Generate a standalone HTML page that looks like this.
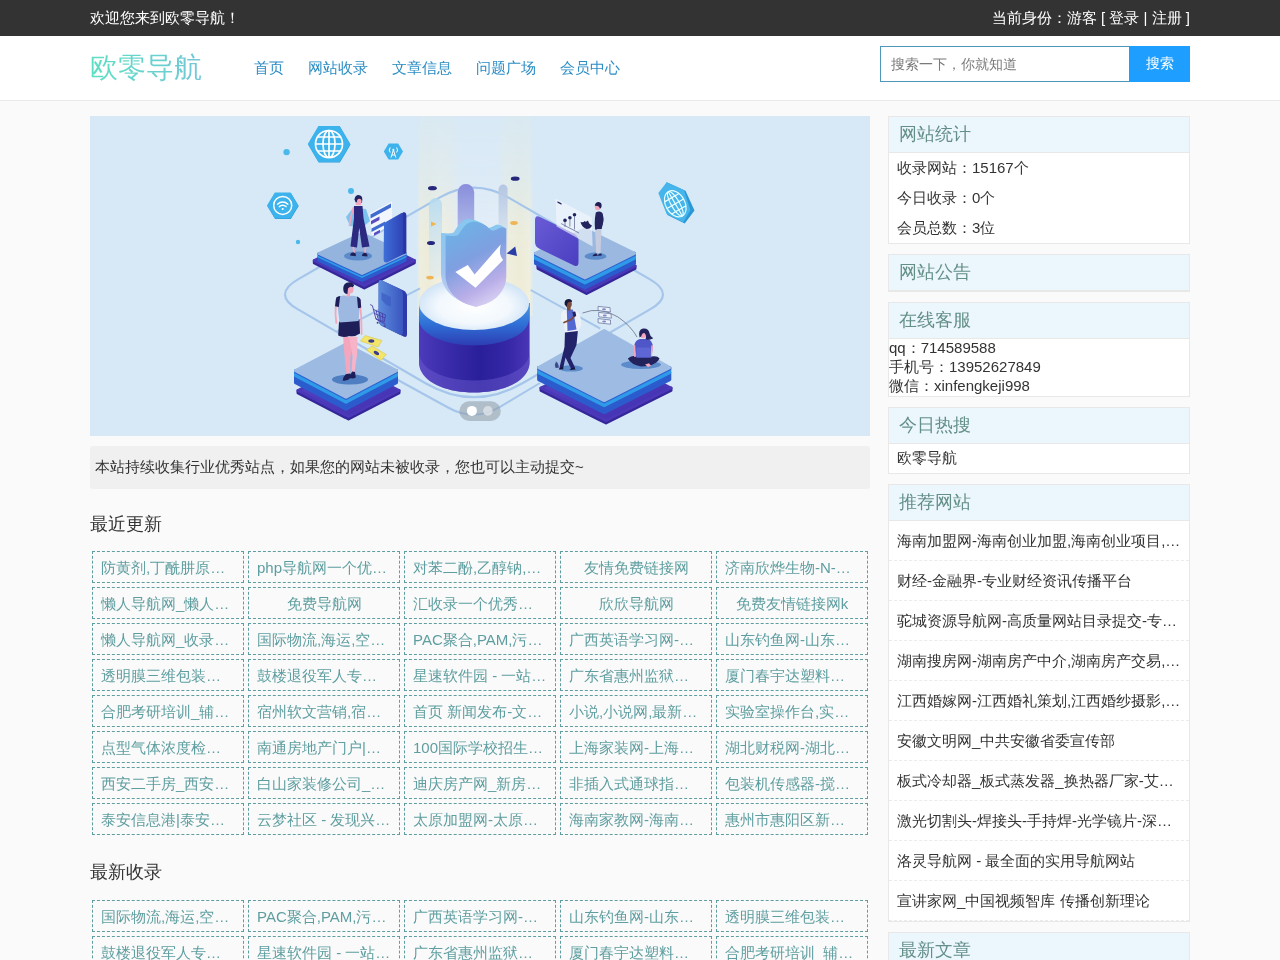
<!DOCTYPE html>
<html>
<head>
<meta charset="utf-8">
<title>欧零导航</title>
<style>
*{margin:0;padding:0;box-sizing:border-box;}
html,body{width:1280px;height:960px;overflow:hidden;}
body{font-family:"Liberation Sans",sans-serif;font-size:15px;color:#333;background:#fafafa;line-height:1.2;}
.topbar,.header,.main{will-change:transform;}
a{text-decoration:none;color:inherit;}
ul{list-style:none;}
.wrap{width:1100px;margin:0 auto;position:relative;}
.topbar{height:36px;background:#333;color:#fff;line-height:36px;font-size:15px;}
.topbar .r{position:absolute;right:0;top:0;}
.header{height:65px;background:#fff;border-bottom:1px solid #eaeaea;}
.logo{position:absolute;left:0;top:15px;font-size:28px;line-height:34px;background:linear-gradient(90deg,#5cdfc2,#74c7d8);-webkit-background-clip:text;background-clip:text;color:transparent;}
.nav{position:absolute;left:164px;top:0;}
.nav a{display:inline-block;height:64px;line-height:64px;font-size:15px;color:#2b8cc4;margin-right:24px;}
.search{position:absolute;right:0;top:10px;width:310px;height:36px;}
.search .inp{position:absolute;left:0;top:0;width:249px;height:36px;border:1px solid #4f98ba;border-right:0;background:#fff;line-height:34px;padding-left:10px;color:#7a7a7a;font-size:14px;}
.search .btn{position:absolute;right:0;top:0;width:61px;height:36px;background:#1e9fff;color:#fff;text-align:center;line-height:35px;font-size:14px;}
.main{position:relative;margin-top:15px;height:844px;}
.left{position:absolute;left:0;top:0;width:780px;}
.right{position:absolute;left:798px;top:0;width:302px;}
.banner{width:780px;height:320px;background:#d7e9f6;position:relative;overflow:hidden;}
.notice{margin-top:10px;height:43px;background:#f0f0f0;border-radius:3px;line-height:41px;padding-left:5px;font-size:15px;color:#333;}
h2.t{font-weight:normal;font-size:18px;line-height:24px;margin-top:23px;margin-bottom:13px;color:#333;}
.grid{display:flex;flex-wrap:wrap;}
.grid a{width:152px;height:32px;border:1px dashed #5f9ea0;margin:2px;line-height:32px;font-size:15px;color:#5f9ea0;padding:0 8px;white-space:nowrap;overflow:hidden;text-overflow:ellipsis;text-align:center;}
.box{border:1px solid #e8e8e8;background:#fff;margin-bottom:10px;}
.box h3{font-weight:normal;font-size:18px;height:36px;line-height:34px;background:#ecf6fd;color:#638f87;padding-left:10px;border-bottom:1px solid #e8e8e8;}
.box .li{height:30px;line-height:30px;padding-left:8px;font-size:15px;}
.box .rec{height:40px;line-height:39px;padding:0 8px;font-size:15px;border-bottom:1px dashed #ebebeb;white-space:nowrap;overflow:hidden;text-overflow:ellipsis;}
</style>
</head>
<body>
<div class="topbar"><div class="wrap"><span>欢迎您来到欧零导航！</span><span class="r">当前身份：游客 [ 登录 | 注册 ]</span></div></div>
<div class="header"><div class="wrap">
<div class="logo">欧零导航</div>
<div class="nav"><a>首页</a><a>网站收录</a><a>文章信息</a><a>问题广场</a><a>会员中心</a></div>
<div class="search"><div class="inp">搜索一下，你就知道</div><div class="btn">搜索</div></div>
</div></div>
<div class="wrap main">
<div class="left">
<div class="banner"><!--BANNER--><svg viewBox="90 116 780 320" width="780" height="320" style="position:absolute;left:0;top:0;display:block">
<defs>
<linearGradient id="gShadow" x1="0" y1="0" x2="1" y2="1"><stop offset="0" stop-color="#5a45c8"/><stop offset="1" stop-color="#3f2fae"/></linearGradient>
<linearGradient id="gBeamFade" x1="0" y1="0" x2="0" y2="1"><stop offset="0" stop-color="#fff" stop-opacity="0.12"/><stop offset="0.3" stop-color="#fff" stop-opacity="0.35"/><stop offset="0.6" stop-color="#fff" stop-opacity="0.85"/><stop offset="1" stop-color="#fff" stop-opacity="1"/></linearGradient>
<mask id="mBeam"><rect x="410" y="116" width="130" height="200" fill="url(#gBeamFade)"/></mask>
<linearGradient id="gBeam" x1="0" y1="0" x2="1" y2="0">
<stop offset="0" stop-color="#f1eedc" stop-opacity="0.2"/><stop offset="0.03" stop-color="#f1eedb"/><stop offset="0.1" stop-color="#efecd6"/><stop offset="0.2" stop-color="#f3f0de"/><stop offset="0.3" stop-color="#f0eee0"/><stop offset="0.36" stop-color="#e6eef6"/>
<stop offset="0.55" stop-color="#e4eef8"/>
<stop offset="0.7" stop-color="#e6eef6"/><stop offset="0.76" stop-color="#f2efdc"/><stop offset="0.88" stop-color="#efecd4"/><stop offset="0.97" stop-color="#f2efdb"/><stop offset="1" stop-color="#f1eedc" stop-opacity="0.2"/>
</linearGradient>
<linearGradient id="gCylBody" x1="0" y1="0" x2="1" y2="0"><stop offset="0" stop-color="#4c3bba"/><stop offset="0.25" stop-color="#3a2cab"/><stop offset="0.55" stop-color="#2a1f9a"/><stop offset="0.8" stop-color="#3527a6"/><stop offset="1" stop-color="#4a36b6"/></linearGradient>
<linearGradient id="gCylBand" x1="0" y1="0" x2="0" y2="1"><stop offset="0" stop-color="#4a9be6"/><stop offset="0.5" stop-color="#2f6fd6"/><stop offset="1" stop-color="#2d3db4"/></linearGradient>
<radialGradient id="gCylTop" cx="0.5" cy="0.55" r="0.6"><stop offset="0" stop-color="#ffffff"/><stop offset="0.55" stop-color="#f2f8fd"/><stop offset="1" stop-color="#c4dcf4"/></radialGradient>
<linearGradient id="gShield" x1="0.2" y1="0" x2="0.6" y2="1"><stop offset="0" stop-color="#6cb3e6"/><stop offset="0.45" stop-color="#7f9fe0"/><stop offset="0.8" stop-color="#b9aee8"/><stop offset="1" stop-color="#d6cef2"/></linearGradient>
<linearGradient id="gShieldSide" x1="0" y1="0" x2="0" y2="1"><stop offset="0" stop-color="#86c8f0"/><stop offset="0.6" stop-color="#9fc4f0"/><stop offset="1" stop-color="#d0d4f4"/></linearGradient>
<linearGradient id="gPill" x1="0" y1="0" x2="0" y2="1"><stop offset="0" stop-color="#8a8edc"/><stop offset="0.5" stop-color="#a9b4e6"/><stop offset="1" stop-color="#cfe0f4" stop-opacity="0.6"/></linearGradient>
<linearGradient id="gPill3" x1="0" y1="0" x2="0" y2="1"><stop offset="0" stop-color="#b4daf0" stop-opacity="0.85"/><stop offset="1" stop-color="#d8e8f4" stop-opacity="0.4"/></linearGradient>
<linearGradient id="gPill2" x1="0" y1="0" x2="0" y2="1"><stop offset="0" stop-color="#b4c6e2"/><stop offset="1" stop-color="#d6e4f4" stop-opacity="0.5"/></linearGradient>
<linearGradient id="gPanelTL" x1="0" y1="0" x2="1" y2="0"><stop offset="0" stop-color="#3f6fd8"/><stop offset="1" stop-color="#2c3cb0"/></linearGradient>
<linearGradient id="gPanelTR" x1="0" y1="0" x2="1" y2="1"><stop offset="0" stop-color="#6a5cd6"/><stop offset="1" stop-color="#4a3ec0"/></linearGradient>
<linearGradient id="gPhone" x1="0" y1="0" x2="1" y2="0"><stop offset="0" stop-color="#5a8cdc"/><stop offset="1" stop-color="#3a55c0"/></linearGradient>
</defs>
<rect x="90" y="116" width="780" height="320" fill="#d7e9f6"/>
<rect x="417" y="116" width="116" height="200" fill="url(#gBeam)" mask="url(#mBeam)"/>
<path d="M298.0,309.4 Q272.0,294.4 298.0,279.4 L439.4,197.6 Q474.0,177.6 508.6,197.6 L650.0,279.4 Q676.0,294.4 650.0,309.4 L522.5,383.2 Q474.0,411.2 425.5,383.2 Z" fill="none" stroke="#a5c5ea" stroke-width="2.2"/>
<path d="M420,288.3 L336.7,331.7 M530.7,290 L600.3,328.6" fill="none" stroke="#a5c5ea" stroke-width="2"/>
<path d="M397,379.5 L448,407.5 Q474,422 500,406.8 L540,383" fill="none" stroke="#a5c5ea" stroke-width="2"/>
<polygon points="308.1,144.6 318.7,126.6 339.90000000000003,126.6 350.5,144.6 339.90000000000003,162.6 318.7,162.6" fill="#2b97d6"/>
<polygon points="307.8,144 318.4,126 339.6,126 350.2,144 339.6,162 318.4,162" fill="#3cb3ec"/>
<g fill="none" stroke="#fff" stroke-width="1.7"><circle cx="329" cy="144" r="13.5"/><ellipse cx="329" cy="144" rx="6" ry="13.5"/><path d="M329,130.5V157.5M315.5,144H342.5M317.5,137H340.5M317.5,151H340.5"/></g>
<polygon points="383.79999999999995,151.4 388.59999999999997,143.4 398.2,143.4 403.0,151.4 398.2,159.4 388.59999999999997,159.4" fill="#3cb3ec"/>
<g fill="none" stroke="#fff" stroke-width="1"><path d="M393.4,150L391,157.5M393.4,150L395.8,157.5M392,155H394.8"/><path d="M390.2,147.5a4,4 0 0 0 0,5M396.6,147.5a4,4 0 0 1 0,5" /></g><circle cx="393.4" cy="149.8" r="1" fill="#fff"/>
<polygon points="267.3,205.9 275.15,192.9 290.85,192.9 298.7,205.9 290.85,218.9 275.15,218.9" fill="#2b97d6"/>
<polygon points="267.0,205.4 274.84999999999997,192.4 290.55,192.4 298.4,205.4 290.55,218.4 274.84999999999997,218.4" fill="#3cb3ec"/>
<g fill="none" stroke="#fff" stroke-width="1.5"><circle cx="282.7" cy="205.4" r="9"/><path d="M277.6,204.2a7,7 0 0 1 10.2,0M279.4,206.6a4.5,4.5 0 0 1 6.6,0" stroke-linecap="round"/></g><circle cx="282.7" cy="209" r="1.1" fill="#fff"/>
<polygon points="666.7,182.2 685.5,190.8 694.5,210.6 684.7,223.5 667.5,215 660,196" fill="#2b97d6"/>
<polygon points="658.3,193 666.7,182.2 684,190.3 690.4,210 683.3,222.3 666.7,214" fill="#45b5ec"/>
<g fill="none" stroke="#eaffff" stroke-width="1.2" transform="rotate(-30 675.3 203.8)"><ellipse cx="675.3" cy="203.8" rx="9.6" ry="14"/><ellipse cx="675.3" cy="203.8" rx="4.2" ry="14"/><path d="M675.3,189.8V217.8M665.7,203.8H684.9M667,196.8H683.6M667,210.8H683.6"/></g>
<circle cx="286.6" cy="152.1" r="3.2" fill="#4ab8ea"/><circle cx="351" cy="191" r="3" fill="#4ab8ea"/><circle cx="298" cy="242" r="2.2" fill="#4ab8ea"/>
<polygon points="314.3,260.5 364.3,285.5 414.3,260.5 414.3,263.0 364.3,288.0 314.3,263.0" fill="#35279a" stroke="#35279a" stroke-width="3" stroke-linejoin="round"/>
<polygon points="314.3,260.5 364.3,235.5 414.3,260.5 364.3,285.5" fill="url(#gShadow)" stroke="#4a38b8" stroke-width="3" stroke-linejoin="round"/>
<polygon points="319,256.5 362,276.5 405,256.5 405,260.5 362,280.5 319,260.5" fill="#2b5bcc" stroke="#2b5bcc" stroke-width="3" stroke-linejoin="round"/>
<polygon points="319,253.5 362,273.5 405,253.5 405,256.5 362,276.5 319,256.5" fill="#2f9be8" stroke="#2f9be8" stroke-width="3" stroke-linejoin="round"/>
<polygon points="319,253.5 362,273.5 405,253.5 405,254.7 362,274.7 319,254.7" fill="#2d62d2" stroke="#2d62d2" stroke-width="3" stroke-linejoin="round"/>
<polygon points="319,253.5 362,233.5 405,253.5 362,273.5" fill="#94b4de" stroke="#94b4de" stroke-width="3" stroke-linejoin="round"/>
<ellipse cx="358" cy="256" rx="14" ry="4.5" fill="#5c8bcb"/>
<polygon points="369.5,213.5 392,201.5 392,224 372,236" fill="#f2f6fc"/>
<polygon points="370.5,214.5 391,203.5 391,207.5 370.5,218.5" fill="#3f6bd0"/><polygon points="371,221 379.5,216.5 379.5,220 371,224.5" fill="#5a4cc0"/><polygon points="371.5,228.5 385,221.5 385,225 371.5,232" fill="#3f6bd0"/><polygon points="374,233 380,229.8 380,232.6 374,235.8" fill="#5a4cc0"/>
<polygon points="346,217 353,208 366,209 370,221 362,228 350,226" fill="#7cc3ee"/>
<path d="M384,223 L401.5,213 Q405.5,211.2 406,215 L406,253 L387,262.5 Q383.5,263 383.6,259 Z" fill="url(#gPanelTL)"/>
<path d="M403,212.6 Q406,211.2 406.4,215 L406.4,253 L403.5,254.5Z" fill="#2a34a4"/>
<g><path d="M354.5,199.5 q0.5,-4.5 4,-4.5 q4,0.3 3.8,4.8 l-0.3,3 l-2,0.5 l-4.5,-1z" fill="#23235e"/><ellipse cx="359.3" cy="201.6" rx="2.3" ry="2.8" fill="#f4a6bd"/><path d="M353.5,207.5 l-3,11 l-1,7" stroke="#f4a6bd" stroke-width="1.7" fill="none" stroke-linecap="round"/><path d="M354,206 L362.5,206 L363.5,218 L369.5,246.5 L362,247.5 L359.2,228 L357,247.5 L350.5,246.5 L354,218 Z" fill="#2c2a80"/><path d="M355.2,205 l1.2,-2.5 l4,0 l1,2.8z" fill="#f4a6bd"/><path d="M353,247 l1.5,6 M365.5,247.5 l-0.5,5.5" stroke="#f4a6bd" stroke-width="1.6"/><path d="M350,255.5 q0.5,-3.2 4,-3 l1.8,1.2 l0,2.5z M362,256 q0,-3 3.2,-3.3 l2,1.2 l0.3,2.5z" fill="#1f1f56"/></g>
<polygon points="538.0,266 586.5,291 635.0,266 635.0,268.5 586.5,293.5 538.0,268.5" fill="#35279a" stroke="#35279a" stroke-width="3" stroke-linejoin="round"/>
<polygon points="538.0,266 586.5,241 635.0,266 586.5,291" fill="url(#gShadow)" stroke="#4a38b8" stroke-width="3" stroke-linejoin="round"/>
<polygon points="535.5,258.4 585,282.9 634.5,258.4 634.5,263.4 585,287.9 535.5,263.4" fill="#2b5bcc" stroke="#2b5bcc" stroke-width="3" stroke-linejoin="round"/>
<polygon points="535.5,253.4 585,277.9 634.5,253.4 634.5,258.4 585,282.9 535.5,258.4" fill="#2f9be8" stroke="#2f9be8" stroke-width="3" stroke-linejoin="round"/>
<polygon points="535.5,253.4 585,277.9 634.5,253.4 634.5,254.6 585,279.09999999999997 535.5,254.6" fill="#2d62d2" stroke="#2d62d2" stroke-width="3" stroke-linejoin="round"/>
<polygon points="535.5,253.4 585,228.9 634.5,253.4 585,277.9" fill="#9ab8e0" stroke="#9ab8e0" stroke-width="3" stroke-linejoin="round"/>
<ellipse cx="595.5" cy="256.2" rx="11" ry="3.6" fill="#5c8bcb"/>
<path d="M535,220.5 Q535,214.5 540,217 L574,233.5 Q578.5,236 578.5,241 L578.5,262 Q578.5,267.5 574,265.5 L539,248.5 Q535,246.5 535,242 Z" fill="url(#gPanelTR)"/>
<polygon points="555.6,198.5 591.7,217.4 592.6,246.6 556.5,226.5" fill="#f4f7fc" fill-opacity="0.62"/>
<g fill="#23235e"><circle cx="565" cy="220.4" r="1.8"/><circle cx="569.9" cy="217.8" r="1.8"/><circle cx="574.5" cy="214.8" r="1.8"/><path d="M580.5,222 q1,5 6,7 q4,0 5.5,-3.5 q-3,-1 -4,-5 q-2,2 -3.5,0.5 q-1,2 -4,1z"/><rect x="557.5" y="201.6" width="4" height="1.6" transform="skewY(27) translate(0,-284.5)" /></g>
<path d="M565,221v6M569.9,219v7.5M574.5,216v13.5 M561,223.5l18,9.5" stroke="#55608a" stroke-width="0.7" fill="none"/>
<g><path d="M596.2,253.5 L595,229 L601.5,229 L600.5,253.5 z" fill="#c6cce0"/><path d="M595.8,212.5 q3.5,-1.8 6,0 q2,3 1.5,9 l-1.6,7.5 l-6.6,0 q-1,-8 0.7,-16.5z" fill="#25255f"/><path d="M601.5,214 q1.8,6 -0.5,11.5 l-5,3" stroke="#25255f" stroke-width="2.2" fill="none" stroke-linecap="round"/><ellipse cx="597.8" cy="206.8" rx="3" ry="3.5" fill="#f4a6bd"/><path d="M594.8,205.8 q0.5,-4 4,-3.8 q3.6,0.6 2.6,5.2 l-1.4,1.6 q-0.6,-3.4 -5.2,-3z" fill="#1f1f56"/><path d="M592.5,256.3 q1,-2.8 4.2,-2.8 l1,2.2z M597.5,255.8 q1.2,-2.4 3.6,-2.2 l0.8,1.8z" fill="#1f1f56"/></g>
<rect x="457.7" y="184" width="16.5" height="80" rx="8.2" fill="url(#gPill)"/>
<rect x="498.6" y="184.6" width="9" height="70" rx="4.5" fill="url(#gPill2)"/>
<rect x="429" y="198" width="13" height="80" rx="6.5" fill="url(#gPill3)"/>
<ellipse cx="432.4" cy="188.2" rx="4.4" ry="2.1" fill="#26267a"/><ellipse cx="515.2" cy="178.7" rx="4.4" ry="2.1" fill="#26267a"/><ellipse cx="431" cy="243" rx="4" ry="2" fill="#26267a"/>
<polygon points="431,221.5 436.5,224 431,226.5" fill="#f1b64a"/><ellipse cx="514" cy="223" rx="3.8" ry="1.9" fill="#eeb456"/><ellipse cx="430" cy="277.6" rx="3.8" ry="1.9" fill="#eeb456"/>
<polygon points="506.6,253.5 515.2,246.6 517,256" fill="#2a3ca6"/>
<path d="M419,303 L419,362 C419,381 444,392.5 474,392.5 C504,392.5 529.6,381 529.6,362 L529.6,303 Z" fill="url(#gCylBody)"/>
<path d="M419,352 C419,369 444,380.5 474,380.5 C504,380.5 529.6,369 529.6,352 L529.6,362 C529.6,381 504,392.5 474,392.5 C444,392.5 419,381 419,362 Z" fill="#7262d2" fill-opacity="0.42"/>
<path d="M419,303 L419,319 A55,26.5 0 0 0 529,319 L529,303 Z" fill="url(#gCylBand)"/>
<ellipse cx="474" cy="303.4" rx="55" ry="26.6" fill="url(#gCylTop)"/>
<path d="M445.6,235.6 C450,236 455,236.5 458.2,235 C461,231 463,227 466,224.8 C469,222 472,221.5 474.3,221.8 C479,222 483,224 486.3,226 C489,228 490.5,230.3 492.3,230.8 C496,230.5 499,228 501.9,227.2 L506.3,228.4 L506.3,277 C506,283 504.5,287 501.9,291.3 C498,297 494,300 490,302 C485,304.5 480,306 476.1,306.9 C472,306 467,304.5 462.4,302 C457,299 453,295.5 450.4,291.3 C447.5,287 446,282 445.6,277 Z" transform="translate(-4.60,-2.60)" fill="url(#gShieldSide)"/>
<path d="M445.6,235.6 C450,236 455,236.5 458.2,235 C461,231 463,227 466,224.8 C469,222 472,221.5 474.3,221.8 C479,222 483,224 486.3,226 C489,228 490.5,230.3 492.3,230.8 C496,230.5 499,228 501.9,227.2 L506.3,228.4 L506.3,277 C506,283 504.5,287 501.9,291.3 C498,297 494,300 490,302 C485,304.5 480,306 476.1,306.9 C472,306 467,304.5 462.4,302 C457,299 453,295.5 450.4,291.3 C447.5,287 446,282 445.6,277 Z" transform="translate(-3.83,-2.17)" fill="url(#gShieldSide)"/>
<path d="M445.6,235.6 C450,236 455,236.5 458.2,235 C461,231 463,227 466,224.8 C469,222 472,221.5 474.3,221.8 C479,222 483,224 486.3,226 C489,228 490.5,230.3 492.3,230.8 C496,230.5 499,228 501.9,227.2 L506.3,228.4 L506.3,277 C506,283 504.5,287 501.9,291.3 C498,297 494,300 490,302 C485,304.5 480,306 476.1,306.9 C472,306 467,304.5 462.4,302 C457,299 453,295.5 450.4,291.3 C447.5,287 446,282 445.6,277 Z" transform="translate(-3.07,-1.73)" fill="url(#gShieldSide)"/>
<path d="M445.6,235.6 C450,236 455,236.5 458.2,235 C461,231 463,227 466,224.8 C469,222 472,221.5 474.3,221.8 C479,222 483,224 486.3,226 C489,228 490.5,230.3 492.3,230.8 C496,230.5 499,228 501.9,227.2 L506.3,228.4 L506.3,277 C506,283 504.5,287 501.9,291.3 C498,297 494,300 490,302 C485,304.5 480,306 476.1,306.9 C472,306 467,304.5 462.4,302 C457,299 453,295.5 450.4,291.3 C447.5,287 446,282 445.6,277 Z" transform="translate(-2.30,-1.30)" fill="url(#gShieldSide)"/>
<path d="M445.6,235.6 C450,236 455,236.5 458.2,235 C461,231 463,227 466,224.8 C469,222 472,221.5 474.3,221.8 C479,222 483,224 486.3,226 C489,228 490.5,230.3 492.3,230.8 C496,230.5 499,228 501.9,227.2 L506.3,228.4 L506.3,277 C506,283 504.5,287 501.9,291.3 C498,297 494,300 490,302 C485,304.5 480,306 476.1,306.9 C472,306 467,304.5 462.4,302 C457,299 453,295.5 450.4,291.3 C447.5,287 446,282 445.6,277 Z" transform="translate(-1.53,-0.87)" fill="url(#gShieldSide)"/>
<path d="M445.6,235.6 C450,236 455,236.5 458.2,235 C461,231 463,227 466,224.8 C469,222 472,221.5 474.3,221.8 C479,222 483,224 486.3,226 C489,228 490.5,230.3 492.3,230.8 C496,230.5 499,228 501.9,227.2 L506.3,228.4 L506.3,277 C506,283 504.5,287 501.9,291.3 C498,297 494,300 490,302 C485,304.5 480,306 476.1,306.9 C472,306 467,304.5 462.4,302 C457,299 453,295.5 450.4,291.3 C447.5,287 446,282 445.6,277 Z" transform="translate(-0.77,-0.43)" fill="url(#gShieldSide)"/>
<path d="M445.6,235.6 C450,236 455,236.5 458.2,235 C461,231 463,227 466,224.8 C469,222 472,221.5 474.3,221.8 C479,222 483,224 486.3,226 C489,228 490.5,230.3 492.3,230.8 C496,230.5 499,228 501.9,227.2 L506.3,228.4 L506.3,277 C506,283 504.5,287 501.9,291.3 C498,297 494,300 490,302 C485,304.5 480,306 476.1,306.9 C472,306 467,304.5 462.4,302 C457,299 453,295.5 450.4,291.3 C447.5,287 446,282 445.6,277 Z" fill="url(#gShield)"/>
<path d="M455.4,272.1 L467.8,264.9 L474.6,274.5 L500.7,244.5 Q499.6,250 500.1,254.1 Q501,258 503.1,260.1 L475.5,287.7 Z" fill="#fff"/>
<polygon points="298.0,390.5 348.5,416.5 399.0,390.5 399.0,393.0 348.5,419.0 298.0,393.0" fill="#35279a" stroke="#35279a" stroke-width="3" stroke-linejoin="round"/>
<polygon points="298.0,390.5 348.5,364.5 399.0,390.5 348.5,416.5" fill="url(#gShadow)" stroke="#4a38b8" stroke-width="3" stroke-linejoin="round"/>
<polygon points="295.5,375.7 346,402.2 396.5,375.7 396.5,382.7 346,409.2 295.5,382.7" fill="#2b5bcc" stroke="#2b5bcc" stroke-width="3" stroke-linejoin="round"/>
<polygon points="295.5,370.7 346,397.2 396.5,370.7 396.5,375.7 346,402.2 295.5,375.7" fill="#2f9be8" stroke="#2f9be8" stroke-width="3" stroke-linejoin="round"/>
<polygon points="295.5,370.7 346,397.2 396.5,370.7 396.5,371.9 346,398.4 295.5,371.9" fill="#2d62d2" stroke="#2d62d2" stroke-width="3" stroke-linejoin="round"/>
<polygon points="295.5,370.7 346,344.2 396.5,370.7 346,397.2" fill="#9dbbe2" stroke="#9dbbe2" stroke-width="3" stroke-linejoin="round"/>
<ellipse cx="350" cy="379.6" rx="18" ry="5" fill="#4f7fc2"/>
<path d="M378.6,283 Q378.6,279 382,280.5 L403.5,290.5 Q407,292.5 407,296 L407,334 Q407,338 403.5,336.5 L382,326 Q378.6,324 378.6,320 Z" fill="#2f3aa8"/>
<path d="M378.6,283 Q378.6,279 382,280.5 L400.5,289.2 Q403,290.6 403,294 L403,332.5 Q403,336 400,334.8 L382,326 Q378.6,324 378.6,320 Z" fill="url(#gPhone)"/>
<path d="M381.5,292.5 l9.5,4.5 l0,9.5 q-4.5,0 -9.5,-7z" fill="#3e5fc4" fill-opacity="0.8"/>
<g stroke="#4a3fa8" stroke-width="0.9" fill="none"><path d="M370.2,304.6 l2.2,1 l3.6,13.6 l9.6,5 M373.4,309.4 l12.2,5.6 l-1.4,7 l-8.4,-3.4 M376.4,311 l1.4,7.4 M379.4,312.4 l1,7.2 M382.4,313.8 l0.6,7.2 M374.4,313.4 l10.6,4.6"/></g><circle cx="377.6" cy="322.8" r="1" fill="#4a3fa8"/><circle cx="384.6" cy="326" r="1" fill="#4a3fa8"/>
<polygon points="360.5,341 365,335.5 382,340.5 378,347" fill="#f3e46a" stroke="#d9c84a" stroke-width="0.6"/><ellipse cx="371.3" cy="341" rx="3" ry="1.7" fill="#3a3c8a"/>
<polygon points="366.6,350 372,346 386.3,354.5 381,360.4" fill="#f3e46a" stroke="#d9c84a" stroke-width="0.6"/><ellipse cx="376.4" cy="353" rx="3" ry="1.7" fill="#3a3c8a" transform="rotate(28 376.4 353)"/>
<g><path d="M343,336 L344.8,358 L346.5,374 L350,374 L350.5,357 L353.5,338 z" fill="#f4a6bd"/><path d="M349,336 L352.5,356 L351.5,372 L354.5,372 L357,355 L357.5,337 z" fill="#f7b4c8"/><path d="M336,300 l-0.5,14 l0.8,9 M359.6,300 l1.6,16 l0.4,18" stroke="#f4a6bd" stroke-width="1.8" fill="none" stroke-linecap="round"/><path d="M339,321.5 L359.5,319.5 L360,333.5 Q355,337 349.5,336 Q343,338 338.2,335.5 Z" fill="#1e1e58"/><path d="M336.5,297.5 Q343,294.5 347,296.2 L352,295.8 Q358,295.8 360.4,299.2 L358.6,321 L339.6,322.6 Z" fill="#9db9e2"/><path d="M336.3,297.6 Q338,296.4 340.2,296 L338.8,307 L335,306.2 Z M357,296.4 Q359.6,297.4 360.6,299.4 L361.2,307.6 L358,308.2 Z" fill="#1e1e58"/><rect x="346.5" y="291" width="3.6" height="5.5" fill="#f4a6bd"/><ellipse cx="350" cy="289.3" rx="3.6" ry="4.2" fill="#f4a6bd"/><path d="M343.6,291.5 q-1.4,-6.8 3,-8.8 q5.4,-1.6 7.6,2.6 l-1.4,2 q-2.6,-1.4 -4.8,1.2 l-0.6,5.4 q-2.6,0.2 -3.8,-2.4z" fill="#1e1e58"/><path d="M342.6,380.6 q0.6,-4.6 3.8,-6.6 l4,-0.4 l0.6,4.2 q-3,3.2 -8.4,2.8z M350,378 q0.4,-4.4 2.2,-6.4 l2.8,0.4 l0.8,5.4 q-2.6,1.6 -5.8,0.6z" fill="#1e1e58"/></g>
<polygon points="541,388 606,420.5 671,388 671,390.5 606,423.0 541,390.5" fill="#35279a" stroke="#35279a" stroke-width="3" stroke-linejoin="round"/>
<polygon points="541,388 606,355.5 671,388 606,420.5" fill="url(#gShadow)" stroke="#4a38b8" stroke-width="3" stroke-linejoin="round"/>
<polygon points="538.6,372.6 604.2,405.6 669.8000000000001,372.6 669.8000000000001,379.6 604.2,412.6 538.6,379.6" fill="#2b5bcc" stroke="#2b5bcc" stroke-width="3" stroke-linejoin="round"/>
<polygon points="538.6,367.6 604.2,400.6 669.8000000000001,367.6 669.8000000000001,372.6 604.2,405.6 538.6,372.6" fill="#2f9be8" stroke="#2f9be8" stroke-width="3" stroke-linejoin="round"/>
<polygon points="538.6,367.6 604.2,400.6 669.8000000000001,367.6 669.8000000000001,368.8 604.2,401.8 538.6,368.8" fill="#2d62d2" stroke="#2d62d2" stroke-width="3" stroke-linejoin="round"/>
<polygon points="538.6,367.6 604.2,330.6 669.8000000000001,367.6 604.2,400.6" fill="#9ebce3" stroke="#9ebce3" stroke-width="3" stroke-linejoin="round"/>
<ellipse cx="641" cy="364.8" rx="20" ry="4.2" fill="#5c8bcb"/><ellipse cx="571" cy="368.4" rx="12" ry="3.2" fill="#5c8bcb"/>
<g><path d="M555.6,368 q-1.4,-3.6 0.4,-6.4 q2.6,1.6 2.8,6.2z" fill="#3a4a8e"/><path d="M565,331 L578,329.5 L576.5,345 L570.5,358 L575.2,368 L571.5,369.5 L565.5,357.5 L563,369 L559.5,367.5 L564.5,347 Z" fill="#22226a"/><path d="M561.2,313 Q563.5,309.5 567,309.5 L574.5,309.5 Q579.5,312 580.6,318 L581.4,325 L578,331 L565,332.5 L563.6,323 L561,321 Z" fill="#eef0f8"/><path d="M566.8,309.8 L573,309.6 L576.5,329.5 L567.5,331 Z" fill="#5468d2"/><path d="M564,322.5 l7,-3 l3.6,-3.6" stroke="#7a4a3c" stroke-width="1.8" fill="none" stroke-linecap="round"/><rect x="572.8" y="311.6" width="3" height="5" rx="0.6" fill="#23235e" transform="rotate(-12 574 314)"/><rect x="567" y="306.5" width="3.6" height="4" fill="#7a4a3c"/><ellipse cx="568.6" cy="304" rx="3.2" ry="3.8" fill="#7a4a3c"/><path d="M564.6,304.4 q-0.6,-5 4,-5.4 q3.8,0.4 3.4,3 q-3,-0.6 -4.6,1.2 l-0.6,3.4z" fill="#17173c"/><path d="M558.6,369.4 q1,-2.6 4.2,-2.6 l0.6,2.4z M569.4,370 q1.2,-2.2 5,-2.4 l1.2,1.8z" fill="#17173c"/></g>
<path d="M582.5,313 Q600,306 618,317 Q631,326 637,337" stroke="#5a5f78" stroke-width="0.7" fill="none"/>
<g fill="#eef2fa" stroke="#5a6a9a" stroke-width="0.7"><polygon points="598,306.4 610,307.6 610.4,312 598.2,310.6"/><polygon points="598.6,312.4 611,313.8 611.4,318.2 598.8,316.8"/><polygon points="598,318.6 610.4,320 610.6,324.2 598.2,322.8"/></g>
<g fill="#7a8fc8"><ellipse cx="604" cy="309.2" rx="2" ry="1"/><ellipse cx="604.8" cy="315.4" rx="2" ry="1"/><ellipse cx="604.2" cy="321.4" rx="2" ry="1"/></g>
<g><path d="M627.8,358.4 Q632,354.6 640,356.5 L650,357 Q657,355 659.6,358.6 Q657,364 648,366 L641,366.4 Q631,364.5 627.8,358.4 Z" fill="#22225c"/><path d="M645,364.5 l3,2.6 l3,-1.4 l-2,-2.4z" fill="#f4a6bd"/><path d="M634,346 Q635.5,339.5 640,339 L648,339 Q652,340.5 652.8,346 L651.5,357.5 L636.5,357.5 Z" fill="#4f56c8"/><path d="M634.4,345 l0.6,12 M652.2,345.4 l-1,11" stroke="#f4a6bd" stroke-width="1.6" fill="none"/><path d="M636.5,347.5 L650.5,347.5 L650.8,357.5 L636.4,357.5Z" fill="#5d66d4"/><ellipse cx="643" cy="334.6" rx="3" ry="3.6" fill="#f4a6bd"/><path d="M639.6,337.5 q-2,-7.6 3.4,-9 q5.6,-0.6 6.6,5 q0.6,3.4 3.6,4.8 q-3.6,2.6 -7.6,0.6 q1.2,-3.8 -1.2,-6 q-2.8,0.4 -3,3.4z" fill="#22225c"/></g>
<rect x="459.3" y="401.3" width="41.5" height="19.6" rx="9.8" fill="#8f9aa6" fill-opacity="0.55"/>
<circle cx="471.9" cy="410.9" r="5" fill="#fff"/><circle cx="487.9" cy="410.9" r="4.8" fill="#e2e6ea" fill-opacity="0.75"/>
</svg><!--/BANNER--></div>
<div class="notice">本站持续收集行业优秀站点，如果您的网站未被收录，您也可以主动提交~</div>
<h2 class="t">最近更新</h2>
<div class="grid">
<a>防黄剂,丁酰肼原料,防黄剂</a><a>php导航网一个优秀的网站</a><a>对苯二酚,乙醇钠,氯化亚砜</a><a>友情免费链接网</a><a>济南欣烨生物-N-甲基苯胺</a>
<a>懒人导航网_懒人网址导航</a><a>免费导航网</a><a>汇收录一个优秀网站分类</a><a>欣欣导航网</a><a>免费友情链接网k</a>
<a>懒人导航网_收录优秀网站</a><a>国际物流,海运,空运,快递</a><a>PAC聚合,PAM,污水处理</a><a>广西英语学习网-英语学习</a><a>山东钓鱼网-山东钓鱼人</a>
<a>透明膜三维包装机_透明膜</a><a>鼓楼退役军人专题网站</a><a>星速软件园 - 一站式软件</a><a>广东省惠州监狱门户网站</a><a>厦门春宇达塑料制品有限</a>
<a>合肥考研培训_辅导班机构</a><a>宿州软文营销,宿州新闻</a><a>首页 新闻发布-文章发布</a><a>小说,小说网,最新热门小说</a><a>实验室操作台,实验台厂家</a>
<a>点型气体浓度检测仪厂家</a><a>南通房地产门户|南通房产</a><a>100国际学校招生网站</a><a>上海家装网-上海装修公司</a><a>湖北财税网-湖北财税服务</a>
<a>西安二手房_西安房产网</a><a>白山家装修公司_白山装修</a><a>迪庆房产网_新房二手房</a><a>非插入式通球指示器厂家</a><a>包装机传感器-搅拌机传感</a>
<a>泰安信息港|泰安在线门户</a><a>云梦社区 - 发现兴趣社区</a><a>太原加盟网-太原创业加盟</a><a>海南家教网-海南家教老师</a><a>惠州市惠阳区新时代文明</a>
</div>
<h2 class="t" style="margin-bottom:14px">最新收录</h2>
<div class="grid">
<a>国际物流,海运,空运,快递</a><a>PAC聚合,PAM,污水处理</a><a>广西英语学习网-英语学习</a><a>山东钓鱼网-山东钓鱼人</a><a>透明膜三维包装机_透明膜</a>
<a>鼓楼退役军人专题网站</a><a>星速软件园 - 一站式软件</a><a>广东省惠州监狱门户网站</a><a>厦门春宇达塑料制品有限</a><a>合肥考研培训_辅导班机构</a>
</div>
</div>
<div class="right">
<div class="box"><h3>网站统计</h3><div class="li">收录网站：15167个</div><div class="li">今日收录：0个</div><div class="li">会员总数：3位</div></div>
<div class="box"><h3>网站公告</h3></div>
<div class="box"><h3>在线客服</h3><div style="font-size:15px;line-height:19px;margin-top:-1px;padding-bottom:1px;">qq：714589588<br>手机号：13952627849<br>微信：xinfengkeji998</div></div>
<div class="box"><h3>今日热搜</h3><div class="li" style="height:29px;line-height:28px;">欧零导航</div></div>
<div class="box"><h3>推荐网站</h3>
<div class="rec">海南加盟网-海南创业加盟,海南创业项目,海南加盟</div>
<div class="rec">财经-金融界-专业财经资讯传播平台</div>
<div class="rec">驼城资源导航网-高质量网站目录提交-专业收录</div>
<div class="rec">湖南搜房网-湖南房产中介,湖南房产交易,湖南</div>
<div class="rec">江西婚嫁网-江西婚礼策划,江西婚纱摄影,江西</div>
<div class="rec">安徽文明网_中共安徽省委宣传部</div>
<div class="rec">板式冷却器_板式蒸发器_换热器厂家-艾瑞德板</div>
<div class="rec">激光切割头-焊接头-手持焊-光学镜片-深圳市</div>
<div class="rec">洛灵导航网 - 最全面的实用导航网站</div>
<div class="rec">宣讲家网_中国视频智库 传播创新理论</div>
</div>
<div class="box"><h3>最新文章</h3></div>
</div>
</div>
</body>
</html>
